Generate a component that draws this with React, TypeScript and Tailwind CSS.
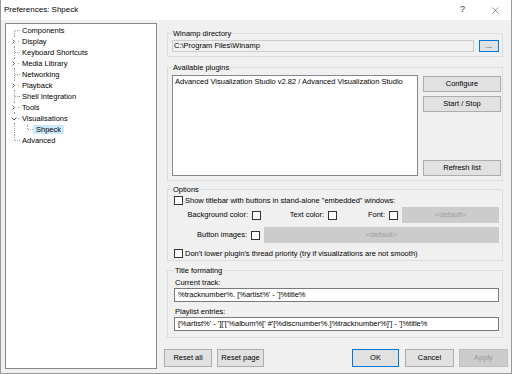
import React from "react";
import { X } from "lucide-react";

type GutterKind = "first" | "mid" | "last" | "closed" | "open" | "child";

function Gutter({ kind }: { kind: GutterKind }) {
  const dot = { stroke: "#a0a0a0", strokeWidth: 1, strokeDasharray: "1 1", shapeRendering: "crispEdges" as const };
  const w = kind === "child" ? 27 : 16;
  return (
    <svg width={w} height={11} className="shrink-0">
      {kind === "first" && <line x1={8.5} y1={6} x2={8.5} y2={11} {...dot} />}
      {(kind === "mid" || kind === "child") && <line x1={8.5} y1={0} x2={8.5} y2={11} {...dot} />}
      {kind === "last" && <line x1={8.5} y1={0} x2={8.5} y2={6} {...dot} />}
      {(kind === "first" || kind === "mid" || kind === "last") && (
        <line x1={9} y1={5.5} x2={14} y2={5.5} {...dot} />
      )}
      {(kind === "closed" || kind === "open") && (
        <>
          <line x1={8.5} y1={0} x2={8.5} y2={2} {...dot} />
          <line x1={8.5} y1={10} x2={8.5} y2={11} {...dot} />
          <line x1={12} y1={5.5} x2={14} y2={5.5} {...dot} />
        </>
      )}
      {kind === "closed" && (
        <path d="M6.5 3.5 L8.5 5.5 L6.5 7.5" fill="none" stroke="#555" strokeWidth={1} />
      )}
      {kind === "open" && (
        <path d="M5.5 4.5 L8 7 L10.5 4.5" fill="none" stroke="#555" strokeWidth={1} />
      )}
      {kind === "child" && (
        <>
          <line x1={21.5} y1={0} x2={21.5} y2={6} {...dot} />
          <line x1={22} y1={5.5} x2={27} y2={5.5} {...dot} />
        </>
      )}
    </svg>
  );
}

const tree: { label: string; kind: GutterKind }[] = [
  { label: "Components", kind: "first" },
  { label: "Display", kind: "closed" },
  { label: "Keyboard Shortcuts", kind: "mid" },
  { label: "Media Library", kind: "closed" },
  { label: "Networking", kind: "mid" },
  { label: "Playback", kind: "closed" },
  { label: "Shell Integration", kind: "mid" },
  { label: "Tools", kind: "closed" },
  { label: "Visualisations", kind: "open" },
  { label: "Shpeck", kind: "child" },
  { label: "Advanced", kind: "last" },
];

function Btn({
  children,
  className = "",
  variant = "normal",
}: {
  children: React.ReactNode;
  className?: string;
  variant?: "normal" | "default" | "disabled";
}) {
  const look =
    variant === "default"
      ? "bg-[#e1e1e1] border-[#0078d7] text-black"
      : variant === "disabled"
      ? "bg-[#cccccc] border-[#bfbfbf] text-[#9a9a9a]"
      : "bg-[#e1e1e1] border-[#adadad] text-black";
  return (
    <div className={`flex items-center justify-center border shrink-0 ${look} ${className}`}>{children}</div>
  );
}

function Check() {
  return <div className="w-[9px] h-[9px] border border-[#333333] bg-white shrink-0" />;
}

function Group({ title, className = "", children }: { title: string; className?: string; children: React.ReactNode }) {
  return (
    <fieldset className={`border border-[#dcdcdc] w-[336px] ml-[3px] ${className}`}>
      <legend className="px-[1px] leading-[9px] h-[9px]">{title}</legend>
      {children}
    </fieldset>
  );
}

export default function App() {
  return (
    <div
      className="w-[512px] h-[374px] bg-[#f0f0f0] border-x border-b border-[#9a9a9a] text-[7.5px] text-black overflow-hidden"
      style={{ fontFamily: '"Liberation Sans", Arial, sans-serif' }}
    >
      {/* title bar */}
      <div className="h-[20px] bg-white flex items-center pl-[3px]">
        <span className="text-[8px]">Preferences: Shpeck</span>
        <span className="ml-auto mr-[25px] text-[9px] text-[#333]">?</span>
        <X size={11} strokeWidth={1} className="mr-[10px] text-[#222]" />
      </div>

      <div className="flex items-start">
        {/* tree */}
        <div className="ml-[4px] mt-[3px] w-[152px] h-[346px] bg-white border border-[#828790] pt-[1px]">
          {tree.map((t) => (
            <div key={t.label} className="flex items-center h-[11px] leading-[11px]">
              <Gutter kind={t.kind} />
              {t.kind === "child" ? (
                <span className="bg-[#cce8ff] px-[3px] leading-[9px] h-[9px]">{t.label}</span>
              ) : (
                <span>{t.label}</span>
              )}
            </div>
          ))}
        </div>

        {/* right column */}
        <div className="ml-[7px] w-[344px] flex flex-col">
          <Group title="Winamp directory" className="mt-[9px] pl-[4px] pr-[3px] pt-[2px] pb-[4px]">
            <div className="flex items-center gap-[5px]">
              <div className="w-[302px] h-[12px] border border-[#cccccc] bg-[#f0f0f0] flex items-center pl-[1px]">
                C:\Program Files\Winamp
              </div>
              <Btn variant="default" className="w-[20px] h-[12px]">
                ...
              </Btn>
            </div>
          </Group>

          <Group title="Available plugins" className="mt-[6px] pl-[4px] pr-[1px] pt-[3px] pb-[4px]">
            <div className="flex gap-[5px]">
              <div className="w-[246px] h-[101px] bg-white border border-[#828790] pl-[2px] pt-[1px] leading-[9px]">
                Advanced Visualization Studio v2.82 / Advanced Visualization Studio
              </div>
              <div className="flex flex-col mt-[1px]">
                <Btn className="w-[78px] h-[16px]">Configure</Btn>
                <Btn className="w-[78px] h-[16px] mt-[4px]">Start / Stop</Btn>
                <Btn className="w-[78px] h-[16px] mt-[48px]">Refresh list</Btn>
              </div>
            </div>
          </Group>

          <Group title="Options" className="mt-[4px] pl-[4px] pr-[2px] pt-[2px] pb-[2px]">
            <div className="flex items-center gap-[2px] ml-[2px] h-[9px]">
              <Check />
              <span>Show titlebar with buttons in stand-alone "embedded" windows:</span>
            </div>
            <div className="flex items-center h-[16px] mt-[2px]">
              <span className="w-[80px] text-right pr-[4px] shrink-0">Background color:</span>
              <Check />
              <span className="w-[67px] text-right pr-[4px] shrink-0">Text color:</span>
              <Check />
              <span className="w-[52px] text-right pr-[4px] shrink-0">Font:</span>
              <Check />
              <div className="ml-[4px] w-[97px] h-[16px] bg-[#cccccc] text-[#a0a0a0] flex items-center justify-center">
                &lt;default&gt;
              </div>
            </div>
            <div className="flex items-center h-[16px] mt-[4px]">
              <span className="w-[79px] text-right pr-[4px] shrink-0">Button images:</span>
              <Check />
              <div className="ml-[4px] w-[235px] h-[16px] bg-[#cccccc] text-[#a0a0a0] flex items-center justify-center">
                &lt;default&gt;
              </div>
            </div>
            <div className="flex items-center gap-[2px] ml-[2px] h-[9px] mt-[6px]">
              <Check />
              <span>Don't lower plugin's thread priority (try if visualizations are not smooth)</span>
            </div>
          </Group>

          <Group title="Title formating" className="mt-[5px] pl-[6px] pr-[3px] pt-[3px] pb-[6px]">
            <div className="ml-[1px] h-[10px] leading-[10px]">Current track:</div>
            <div className="w-[325px] h-[14px] bg-white border border-[#7a7a7a] flex items-center pl-[3px]">
              %tracknumber%. [%artist%' - ']%title%
            </div>
            <div className="ml-[1px] h-[10px] leading-[10px] mt-[5px]">Playlist entries:</div>
            <div className="w-[325px] h-[14px] bg-white border border-[#7a7a7a] flex items-center pl-[3px]">
              [%artist%' - ']['['%album%[' #'[%discnumber%.]%tracknumber%]'] - ']%title%
            </div>
          </Group>

          <div className="flex mt-[11px]">
            <Btn className="w-[48px] h-[18px]">Reset all</Btn>
            <Btn className="w-[47px] h-[18px] ml-[5px]">Reset page</Btn>
            <Btn variant="default" className="w-[47px] h-[18px] ml-auto">
              OK
            </Btn>
            <Btn className="w-[49px] h-[18px] ml-[6px]">Cancel</Btn>
            <Btn variant="disabled" className="w-[49px] h-[18px] ml-[5px]">
              Apply
            </Btn>
          </div>
        </div>
      </div>
    </div>
  );
}
